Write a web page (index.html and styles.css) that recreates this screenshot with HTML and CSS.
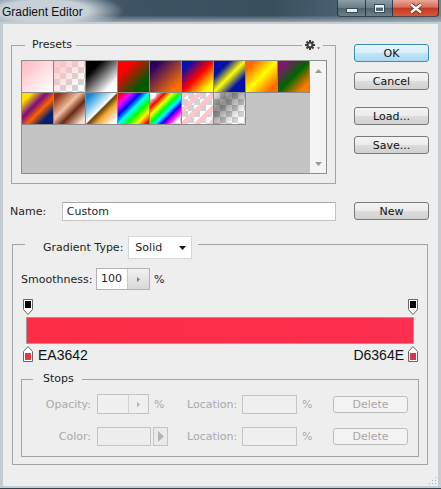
FILE: index.html
```html
<!DOCTYPE html>
<html lang="en">
<head>
    <meta charset="UTF-8">
    <title>Gradient Editor</title>
    <link rel="stylesheet" href="styles.css">
</head>
<body>
    <div class="window">
        <div class="titlebar">
            <span class="title">Gradient Editor</span>
            <div class="caption-buttons">
                <span class="cap cap-min"><svg width="12" height="5" viewBox="0 0 12 5"><rect x="0.5" y="0.5" width="11" height="4" fill="#e8eef2" stroke="#3a4a55"/></svg></span>
                <span class="cap cap-max"><svg width="11" height="9" viewBox="0 0 11 9"><rect x="0.5" y="0.5" width="10" height="8" fill="none" stroke="#3a4a55"/><rect x="1.5" y="1.5" width="8" height="6" fill="none" stroke="#eef2f5"/><rect x="2" y="2" width="7" height="1.5" fill="#eef2f5"/></svg></span>
                <span class="cap cap-close"><svg width="14" height="11" viewBox="0 0 14 11"><path d="M2 1.5L12 9.5M12 1.5L2 9.5" stroke="#6b1f12" stroke-width="4"/><path d="M2 1.5L12 9.5M12 1.5L2 9.5" stroke="#fff" stroke-width="2.4"/></svg></span>
            </div>
        </div>

        <div class="dialog">
            <div class="top-grid">
                <div class="presets-wrap">
                    <fieldset class="group presets">
                        <legend>Presets</legend>
                        <div class="preset-list">
                            <div class="swatches">
                                <div class="sw g1"></div>
                                <div class="sw g2"></div>
                                <div class="sw g3"></div>
                                <div class="sw g4"></div>
                                <div class="sw g5"></div>
                                <div class="sw g6"></div>
                                <div class="sw g7"></div>
                                <div class="sw g8"></div>
                                <div class="sw g9"></div>
                                <div class="sw g10"></div>
                                <div class="sw g11"></div>
                                <div class="sw g12"></div>
                                <div class="sw g13"></div>
                                <div class="sw g14"></div>
                                <div class="sw g15"></div>
                                <div class="sw g16"></div>
                            </div>
                            <div class="scrollbar">
                                <svg width="7" height="4" viewBox="0 0 7 4"><path d="M0 4L3.5 0L7 4Z" fill="#9a9a9a"/></svg>
                                <svg width="7" height="4" viewBox="0 0 7 4"><path d="M0 0L7 0L3.5 4Z" fill="#9a9a9a"/></svg>
                            </div>
                        </div>
                    </fieldset>
                    <!-- gear menu sits on the group border -->
                    <span class="gear">
                        <svg width="17" height="12" viewBox="0 0 17 12">
                            <g fill="#3c3c3c" transform="translate(6 6)">
                                <rect x="-1" y="-5" width="2" height="10"/>
                                <rect x="-1" y="-5" width="2" height="10" transform="rotate(45)"/>
                                <rect x="-1" y="-5" width="2" height="10" transform="rotate(90)"/>
                                <rect x="-1" y="-5" width="2" height="10" transform="rotate(135)"/>
                                <circle r="3.4"/>
                                <circle r="1.4" fill="#eeeeee"/>
                            </g>
                            <path d="M13 8.5L16 8.5L14.5 10Z" fill="#3c3c3c"/>
                        </svg>
                    </span>
                </div>

                <div class="side-buttons">
                    <button class="btn btn-default">OK</button>
                    <button class="btn btn-cancel">Cancel</button>
                    <button class="btn btn-load">Load...</button>
                    <button class="btn btn-save">Save...</button>
                </div>

                <div class="name-row">
                    <label class="name-label">Name:</label>
                    <input class="name-input" type="text" value="Custom">
                </div>
                <button class="btn btn-new">New</button>
            </div>

            <fieldset class="group gradient">
                <legend class="gt-legend">
                    <span class="gt-label">Gradient Type:</span>
                    <span class="select">Solid
                        <svg width="7" height="4" viewBox="0 0 7 4"><path d="M0 0L7 0L3.5 4Z" fill="#111"/></svg>
                    </span>
                </legend>

                <div class="smooth-row">
                    <span class="smooth-label">Smoothness:</span>
                    <span class="spin">
                        <span class="spin-val">100</span>
                        <span class="spin-btn"><svg width="3" height="5" viewBox="0 0 3 5"><path d="M0 0L3 2.5L0 5Z" fill="#6d7f95"/></svg></span>
                    </span>
                    <span class="pct">%</span>
                </div>

                <div class="stop-row top">
                    <svg class="marker" width="10" height="16" viewBox="0 0 10 16"><path d="M0.5 0.5H9.5V10.5L5 15.5L0.5 10.5Z" fill="#fff" stroke="#666"/><rect x="2" y="2" width="6" height="7" fill="#000"/></svg>
                    <svg class="marker" width="10" height="16" viewBox="0 0 10 16"><path d="M0.5 0.5H9.5V10.5L5 15.5L0.5 10.5Z" fill="#fff" stroke="#666"/><rect x="2" y="2" width="6" height="7" fill="#000"/></svg>
                </div>

                <div class="ramp"></div>

                <div class="stop-row bottom">
                    <span class="stop-side">
                        <svg class="marker" width="10" height="16" viewBox="0 0 10 16"><path d="M5 0.5L9.5 5.5V15.5H0.5V5.5Z" fill="#fff" stroke="#666"/><rect x="2" y="7" width="6" height="7" fill="#ea3642"/></svg>
                        <span class="hex">EA3642</span>
                    </span>
                    <span class="stop-side right">
                        <span class="hex">D6364E</span>
                        <svg class="marker" width="10" height="16" viewBox="0 0 10 16"><path d="M5 0.5L9.5 5.5V15.5H0.5V5.5Z" fill="#fff" stroke="#666"/><rect x="2" y="7" width="6" height="7" fill="#d6364e"/></svg>
                    </span>
                </div>

                <fieldset class="group stops">
                    <legend>Stops</legend>
                    <div class="srow">
                        <span class="s-lbl">Opacity:</span>
                        <span class="s-mid">
                            <span class="spin spin-off">
                                <span class="spin-val"></span>
                                <span class="spin-btn"><svg width="3" height="5" viewBox="0 0 3 5"><path d="M0 0L3 2.5L0 5Z" fill="#b0b0b0"/></svg></span>
                            </span>
                            <span class="pct">%</span>
                        </span>
                        <span class="s-loc">Location:</span>
                        <span class="s-box"></span>
                        <span class="s-pct">%</span>
                        <button class="btn btn-off">Delete</button>
                    </div>
                    <div class="srow">
                        <span class="s-lbl">Color:</span>
                        <span class="s-mid">
                            <span class="color-box"></span>
                            <span class="color-arrow"><svg width="6" height="11" viewBox="0 0 6 11"><path d="M0 0L6 5.5L0 11Z" fill="#b4b4b4"/></svg></span>
                        </span>
                        <span class="s-loc">Location:</span>
                        <span class="s-box"></span>
                        <span class="s-pct">%</span>
                        <button class="btn btn-off">Delete</button>
                    </div>
                </fieldset>
            </fieldset>

            <svg class="grip" width="8" height="8" viewBox="0 0 8 8">
                <g fill="#a8b0b6">
                    <rect x="6" y="0" width="1" height="1"/>
                    <rect x="3" y="3" width="1" height="1"/><rect x="6" y="3" width="1" height="1"/>
                    <rect x="0" y="6" width="1" height="1"/><rect x="3" y="6" width="1" height="1"/><rect x="6" y="6" width="1" height="1"/>
                </g>
            </svg>
        </div>
    </div>
</body>
</html>
```

FILE: styles.css
```css
* {
    box-sizing: border-box;
}
:root {
    --chk: conic-gradient(#d2d2d2 25%, #fff 0 50%, #d2d2d2 0 75%, #fff 0) 0 0 / 12px 12px;
}
body {
    margin: 0;
    background: #fff;
    font-family: 'DejaVu Sans', sans-serif;
    font-size: 11px;
    color: #1e1e1e;
}
.window {
    width: 441px;
    height: 489px;
    display: flex;
    flex-direction: column;
    background: #c4cdd4;
    padding: 0 3px 2px 3px;
    border-bottom: 1px solid #34434d;
}

/* title bar */
.titlebar {
    height: 22px;
    margin: 0 -3px;
    display: flex;
    align-items: flex-start;
    background:
        radial-gradient(ellipse 80px 20px at 44px 11px, rgba(200, 209, 216, 1) 55%, rgba(200, 209, 216, 0) 100%),
        linear-gradient(to bottom, rgba(255, 255, 255, 0) 70%, rgba(170, 184, 195, 0.8) 100%),
        linear-gradient(to right, #62788a 0%, #3d5363 30%, #3a4f5e 62%, #4d6475 80%, #6f8596 100%);
}
.title {
    font-family: 'Liberation Sans', sans-serif;
    font-size: 12px;
    line-height: 14px;
    padding: 5px 0 0 2px;
    color: #111;
}
.caption-buttons {
    margin-left: auto;
    margin-right: 2px;
    display: flex;
}
.cap {
    height: 17px;
    display: flex;
    align-items: center;
    justify-content: center;
    border: 1px solid rgba(20, 30, 40, 0.7);
    border-top: none;
    border-left: none;
    background: linear-gradient(#8e9ea9, #6a7c88 48%, #51636f 52%, #6d808c);
}
.cap-min {
    width: 29px;
    border-left: 1px solid rgba(20, 30, 40, 0.7);
    border-bottom-left-radius: 4px;
    align-items: flex-end;
    padding-bottom: 3px;
}
.cap-max {
    width: 27px;
}
.cap-close {
    width: 46px;
    border-bottom-right-radius: 4px;
    background: linear-gradient(#eaa797, #d66d56 45%, #c33a1f 52%, #d8583a);
}

/* dialog body */
.dialog {
    flex: 1;
    margin-top: 2px;
    background: #eeeeee;
    padding: 14px 9px 0 8px;
    display: flex;
    flex-direction: column;
}
.top-grid {
    display: grid;
    grid-template-columns: 325px 75px;
    column-gap: 18px;
    row-gap: 17px;
}
.group {
    margin: 0;
    min-width: 0;
    border: 1px solid #a4a4a4;
}
.group legend {
    line-height: 14px;
}
.presets-wrap {
    position: relative;
}
.presets {
    padding: 8px 8px 9px 9px;
}
.presets legend {
    margin-left: 4px;
    padding: 0 4px 0 7px;
}
.gear {
    position: absolute;
    left: 291px;
    top: 1px;
    padding: 0 2px;
    background: #eeeeee;
    display: flex;
}
.preset-list {
    width: 306px;
    height: 114px;
    display: flex;
    border: 1px solid #8e8e8e;
    background: #c4c4c4;
}
.swatches {
    width: 288px;
    display: grid;
    grid-template-columns: repeat(9, 32px);
    grid-auto-rows: 32px;
    align-content: start;
}
.sw {
    border-right: 1px solid #8a8a8a;
    border-bottom: 1px solid #8a8a8a;
}
.scrollbar {
    flex: 1;
    background: #f4f4f4;
    display: flex;
    flex-direction: column;
    align-items: center;
    justify-content: space-between;
    padding: 8px 0 7px;
}

.g1 { background: linear-gradient(135deg, #ffc0c4 10%, #ffffff 95%); }
.g2 { background: linear-gradient(135deg, #ffc2c6, rgba(255, 194, 198, 0) 85%), var(--chk); }
.g3 { background: linear-gradient(135deg, #000 25%, #fff 80%); }
.g4 { background: linear-gradient(135deg, #ff0000 25%, #005a00 75%); }
.g5 { background: linear-gradient(135deg, #2a0064 15%, #ff7200 85%); }
.g6 { background: linear-gradient(135deg, #0010b4 15%, #ff0000 50%, #ffff00 85%); }
.g7 { background: linear-gradient(135deg, #0010a8 25%, #ffff00 50%, #0010a8 75%); }
.g8 { background: linear-gradient(135deg, #ff6a00 15%, #ffff00 50%, #ff6a00 85%); }
.g9 { background: linear-gradient(135deg, #80166e 15%, #006400 50%, #ff7a00 85%); }
.g10 { background: linear-gradient(135deg, #ffe000 15%, #7a0c80 40%, #ff6000 58%, #002070 80%); }
.g11 { background: linear-gradient(135deg, #8e3410 10%, #f2c0a4 42%, #6c2810 62%, #f6dccc 90%); }
.g12 { background: linear-gradient(135deg, #1088d8 10%, #bfe6fa 40%, #ffffff 48%, #6a4008 52%, #f0a830 66%, #ffffff 92%); }
.g13 { background: linear-gradient(135deg, #ff0000 5%, #ff00ff 20%, #0000ff 36%, #00ffff 50%, #00ff00 64%, #ffff00 80%, #ff0000 95%); }
.g14 { background: linear-gradient(135deg, rgba(255, 0, 0, 0) 12%, #ff0000 24%, #ffff00 36%, #00ff00 48%, #00ffff 58%, #0000ff 68%, #ff00ff 78%, rgba(255, 0, 255, 0) 90%), var(--chk); }
.g15 { background: repeating-linear-gradient(135deg, rgba(255, 196, 202, 0.95) 0 5px, rgba(255, 196, 202, 0) 5px 10px), var(--chk); }
.g16 { background: linear-gradient(135deg, rgba(0, 0, 0, 0.1) 0%, rgba(0, 0, 0, 0.45) 30%, rgba(0, 0, 0, 0) 80%), var(--chk); }

/* buttons */
.side-buttons {
    display: flex;
    flex-direction: column;
    padding-top: 6px;
}
.btn {
    width: 75px;
    height: 18px;
    padding: 0;
    font-family: 'DejaVu Sans', sans-serif;
    font-size: 11px;
    color: #111;
    border: 1px solid #7a7a7a;
    border-radius: 3px;
    background: linear-gradient(#f4f4f4, #ebebeb 48%, #dddddd 52%, #d0d0d0);
}
.btn-default {
    border-color: #3d8ab5;
    background: linear-gradient(#e8f6fd, #d8effb 48%, #c0e5f8 52%, #aad9f2);
}
.btn-cancel { margin-top: 10px; }
.btn-load { margin-top: 17px; }
.btn-save { margin-top: 11px; }
.btn-new { margin-top: 1px; }

.name-row {
    display: flex;
    align-items: center;
    margin-left: -1px;
    height: 20px;
}
.name-label {
    width: 52px;
}
.name-input {
    width: 275px;
    height: 19px;
    border: 1px solid #c4c4c4;
    border-top-color: #a8a8a8;
    background: #fff;
    padding: 0 4px;
    font-family: 'DejaVu Sans', sans-serif;
    font-size: 11px;
    color: #1e1e1e;
}

/* gradient group */
.gradient {
    width: 416px;
    margin: 15px 0 0 1px;
    padding: 16px 8px 7px 8px;
}
.gt-legend {
    display: flex;
    align-items: flex-start;
    margin-left: 4px;
    padding: 0 6px 0 18px;
}
.gt-label {
    line-height: 23px;
    margin-bottom: -7px;
    margin-right: 5px;
}
.select {
    width: 64px;
    height: 23px;
    margin-bottom: -7px;
    display: flex;
    align-items: center;
    justify-content: space-between;
    padding: 0 5px 0 6px;
    background: #fff;
    border: 1px solid #d6d6d6;
}
.smooth-row {
    display: flex;
    align-items: center;
    height: 22px;
}
.smooth-label {
    width: 75px;
}
.spin {
    display: flex;
    width: 54px;
    height: 22px;
    border: 1px solid #b2b2b2;
    background: #fff;
}
.spin-val {
    width: 31px;
    padding-left: 4px;
    line-height: 20px;
    border-right: 1px solid #cacaca;
}
.spin-btn {
    flex: 1;
    display: flex;
    align-items: center;
    justify-content: center;
    background: linear-gradient(#f2f2f2, #d8d8d8);
}
.pct {
    margin-left: 4px;
}
.stop-row {
    display: flex;
    justify-content: space-between;
    height: 16px;
    padding: 0 1px 0 2px;
}
.stop-row.top {
    margin-top: 9px;
}
.marker {
    display: block;
}
.ramp {
    height: 27px;
    margin: 2px 5px;
    border: 1px solid #9c9c9c;
    background: linear-gradient(to right, #fd2d45, #fb2f50);
}
.stop-side {
    display: flex;
    align-items: flex-start;
    gap: 5px;
}
.stop-side.right {
    gap: 4px;
}
.hex {
    font-family: 'Liberation Sans', sans-serif;
    font-size: 14px;
    line-height: 16px;
    padding-top: 1px;
    color: #111;
}

/* stops group */
.stops {
    margin-top: 10px;
    padding: 8px 0 10px 0;
}
.stops legend {
    margin-left: 11px;
    padding: 0 8px 0 10px;
}
.srow {
    display: flex;
    align-items: center;
    height: 20px;
    color: #a9a9a9;
}
.srow + .srow {
    margin-top: 12px;
}
.s-lbl {
    width: 69px;
    text-align: right;
}
.s-mid {
    width: 90px;
    margin-left: 6px;
    display: flex;
    align-items: center;
}
.spin-off {
    width: 52px;
    height: 20px;
    border-color: #c4c4c4;
    background: #f0f0f0;
}
.spin-off .spin-val {
    border-right-color: #d2d2d2;
}
.spin-off .spin-btn {
    background: #efefef;
}
.s-mid .pct {
    margin-left: 5px;
}
.color-box {
    width: 54px;
    height: 19px;
    border: 1px solid #c4c4c4;
    background: #ededed;
}
.color-arrow {
    width: 15px;
    height: 19px;
    margin-left: 2px;
    display: flex;
    align-items: center;
    justify-content: center;
    border: 1px solid #c4c4c4;
    background: #eaeaea;
}
.s-loc {
    width: 55px;
}
.s-box {
    width: 55px;
    height: 19px;
    border: 1px solid #c4c4c4;
    background: #efefef;
}
.s-pct {
    width: 36px;
    padding-left: 5px;
}
.btn-off {
    height: 17px;
    color: #a8a8a8;
    border-color: #bdbdbd;
    background: #f3f3f3;
}

.grip {
    margin-top: auto;
    margin-right: -8px;
    margin-bottom: 1px;
    align-self: flex-end;
}
```
